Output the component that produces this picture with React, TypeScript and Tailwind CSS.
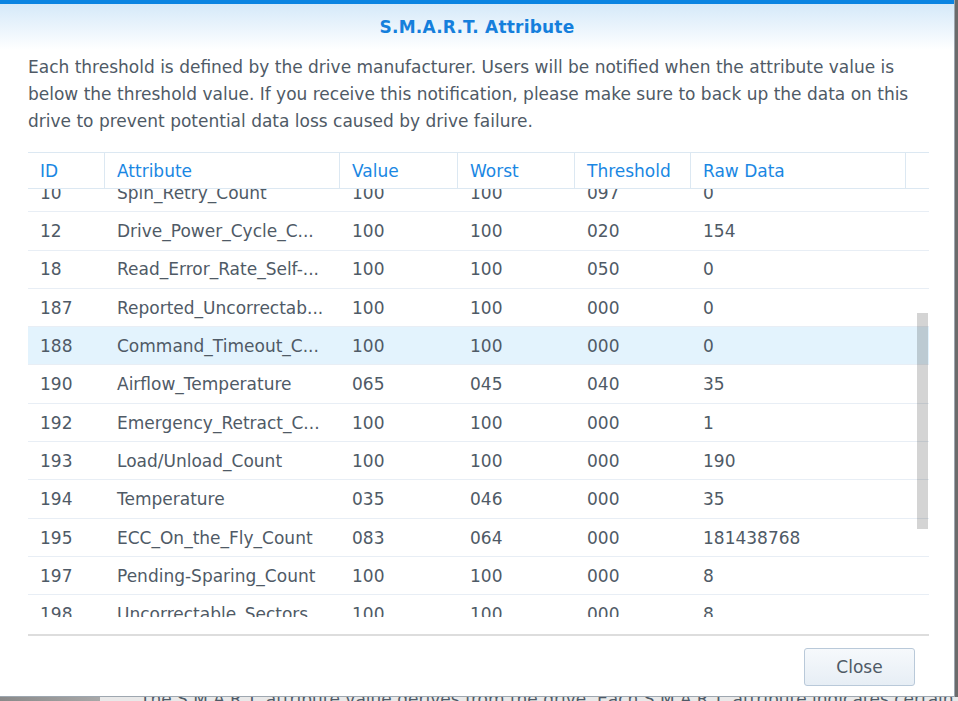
const rows = [
  { id: '10', attr: 'Spin_Retry_Count', value: '100', worst: '100', thresh: '097', raw: '0' },
  { id: '12', attr: 'Drive_Power_Cycle_C...', value: '100', worst: '100', thresh: '020', raw: '154' },
  { id: '18', attr: 'Read_Error_Rate_Self-...', value: '100', worst: '100', thresh: '050', raw: '0' },
  { id: '187', attr: 'Reported_Uncorrectab...', value: '100', worst: '100', thresh: '000', raw: '0' },
  { id: '188', attr: 'Command_Timeout_C...', value: '100', worst: '100', thresh: '000', raw: '0', selected: true },
  { id: '190', attr: 'Airflow_Temperature', value: '065', worst: '045', thresh: '040', raw: '35' },
  { id: '192', attr: 'Emergency_Retract_C...', value: '100', worst: '100', thresh: '000', raw: '1' },
  { id: '193', attr: 'Load/Unload_Count', value: '100', worst: '100', thresh: '000', raw: '190' },
  { id: '194', attr: 'Temperature', value: '035', worst: '046', thresh: '000', raw: '35' },
  { id: '195', attr: 'ECC_On_the_Fly_Count', value: '083', worst: '064', thresh: '000', raw: '181438768' },
  { id: '197', attr: 'Pending-Sparing_Count', value: '100', worst: '100', thresh: '000', raw: '8' },
  { id: '198', attr: 'Uncorrectable_Sectors', value: '100', worst: '100', thresh: '000', raw: '8' },
];

const cols = [
  { key: 'id', label: 'ID', w: 'w-[77px]' },
  { key: 'attr', label: 'Attribute', w: 'w-[235px]' },
  { key: 'value', label: 'Value', w: 'w-[118px]' },
  { key: 'worst', label: 'Worst', w: 'w-[117px]' },
  { key: 'thresh', label: 'Threshold', w: 'w-[116px]' },
  { key: 'raw', label: 'Raw Data', w: 'w-[215px]' },
] as const;

export default function App() {
  return (
    <div
      className="relative w-[958px] h-[701px] overflow-hidden bg-[#6b6b6b]"
      style={{ fontFamily: '"DejaVu Sans", Verdana, sans-serif' }}
    >
      {/* Dialog */}
      <div className="flex flex-col w-[955px] h-[697px] bg-white border-r border-b border-[#9ea7b0]">
        <div className="h-[4px] bg-[#0a84e2]" />
        <div className="h-[46px] flex items-center justify-center pt-[2px] bg-gradient-to-b from-[#d5e9f9] to-white">
          <h1 className="text-[17px] font-bold text-[#157fdc] tracking-[0.2px]">S.M.A.R.T. Attribute</h1>
        </div>

        <p className="px-[28px] pt-[4px] text-[17px] leading-[27px] text-[#4f5a66] whitespace-nowrap">
          Each threshold is defined by the drive manufacturer. Users will be notified when the attribute value is
          <br />
          below the threshold value. If you receive this notification, please make sure to back up the data on this
          <br />
          drive to prevent potential data loss caused by drive failure.
        </p>

        {/* Grid */}
        <div className="mx-[28px] mt-[17px] w-[901px] text-[17px]">
          <div className="flex h-[37px] border-t border-b border-[#dce8f2]">
            {cols.map((c) => (
              <div
                key={c.key}
                className={`${c.w} flex items-center px-[12px] pt-[3px] border-r border-[#dce8f2] text-[#1a87e3]`}
              >
                {c.label}
              </div>
            ))}
            <div className="flex-1" />
          </div>

          <div className="relative h-[428px] overflow-hidden">
            <div className="mt-[-15px]">
              {rows.map((r) => (
                <div
                  key={r.id}
                  className={`flex h-[38.3px] border-b border-[#e8eef5] text-[#4f5a66] ${
                    r.selected ? 'bg-[#e3f3fd]' : ''
                  }`}
                >
                  {cols.map((c) => (
                    <div
                      key={c.key}
                      className={`${c.w} flex items-center px-[12px] pt-[2px] whitespace-nowrap overflow-hidden`}
                    >
                      {r[c.key]}
                    </div>
                  ))}
                </div>
              ))}
            </div>
            <div className="absolute left-[889px] top-[124px] w-[11px] h-[216px] bg-black/[0.17]" />
          </div>

          <div className="h-[17px]" />
          <div className="h-[2px] bg-[#dddddd]" />
        </div>

        <div className="flex justify-end pr-[39px] pt-[12px]">
          <button className="w-[111px] h-[38px] pt-[1px] rounded-[3px] border border-[#b9c9d9] bg-gradient-to-b from-[#f6f9fc] to-[#e7eef5] text-[17px] text-[#4f5a66]">
            Close
          </button>
        </div>
      </div>

      {/* Page behind the dialog */}
      <div className="flex h-[4px] overflow-hidden">
        <div className="w-[100px] bg-gradient-to-r from-[#8a8a8a] to-[#a8a8a8]" />
        <div className="flex-1 bg-[#e9e9e9] pl-[40px]">
          <p className="mt-[-10px] whitespace-nowrap text-[17px] text-[#4f5a66]">
            The S.M.A.R.T. attribute value derives from the drive. Each S.M.A.R.T. attribute indicates certain
          </p>
        </div>
      </div>
    </div>
  );
}
